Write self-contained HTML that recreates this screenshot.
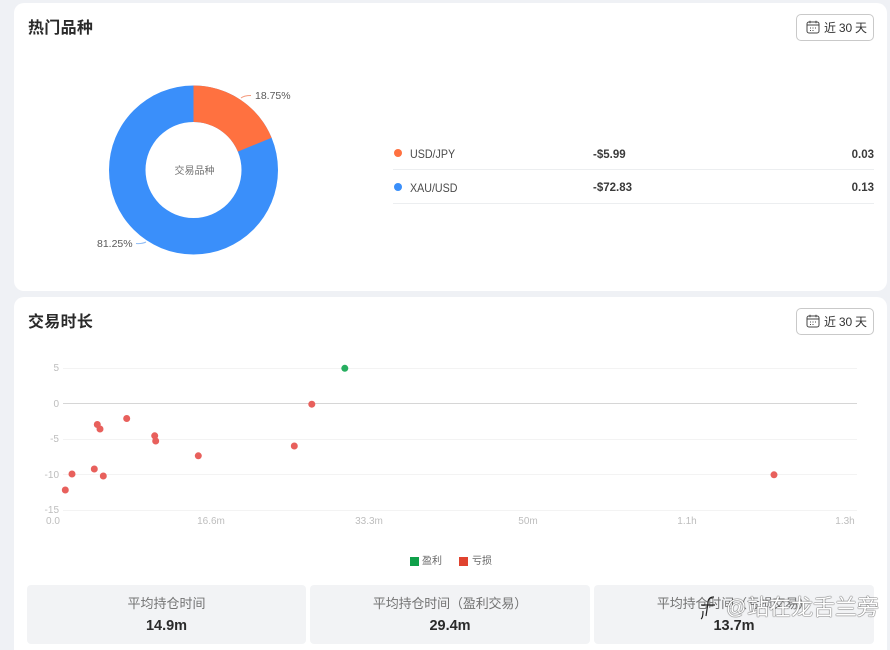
<!DOCTYPE html>
<html><head><meta charset="utf-8">
<style>
html,body{margin:0;padding:0;width:890px;height:650px;overflow:hidden;background:#eff1f5;font-family:"Liberation Sans","Noto Sans CJK SC",sans-serif;color:#262626}
.card{position:absolute;left:14px;width:873px;background:#fff;border-radius:10px}
.abs{position:absolute;white-space:nowrap}
.title{font-size:16px;font-weight:700;color:#2a2a2a;line-height:22px;letter-spacing:.3px}
.btn{position:absolute;left:796px;width:76px;height:25px;border:1px solid #c9c9c9;border-radius:5px;background:#fff;font-size:12px;line-height:26px;color:#333}
.btn svg{position:absolute;left:9px;top:5px}
.btn span{position:absolute;left:27px;top:0;white-space:nowrap;word-spacing:-.5px}
.dot{position:absolute;width:8px;height:8px;border-radius:50%}
.line{position:absolute;left:393px;width:481px;height:1px;background:#eceef0}
.t12{font-size:12px;line-height:16px}
.name{color:#4a4a4a;transform:scaleX(.89);transform-origin:0 50%}
.num{font-weight:700;color:#3a3a3a;font-size:11.5px}
.stat{position:absolute;top:585px;height:59px;background:#f2f3f5;border-radius:4px;text-align:center}
.stat .a{position:absolute;left:0;right:0;top:10px;font-size:13px;line-height:17px;color:#737373}
.stat .b{position:absolute;left:0;right:0;top:31px;font-size:14.5px;line-height:20px;font-weight:700;color:#2a2a2a}
.wm{position:absolute;top:595px;font-size:22px;line-height:26px;color:#fff;white-space:nowrap;text-shadow:0 0 1px #333,0 0 1px #333}
</style></head><body>
<div class="card" style="top:3px;height:288px"></div>
<div class="card" style="top:297px;height:353px;border-radius:10px 10px 0 0"></div>

<div class="abs title" style="left:28px;top:18px">热门品种</div>
<div class="btn" style="top:14px"><svg width="14" height="14" viewBox="0 0 14 14" fill="none" stroke="#444" stroke-width="1"><rect x="1" y="2" width="12" height="11" rx="2"/><path d="M1 5h12M4 .8v2.4M10 .8v2.4"/><path d="M4 8h1M6.5 8h1M9 8h1M4 10.5h1M6.5 10.5h1" stroke-width=".9"/></svg><span>近 30 天</span></div>

<svg class="abs" style="left:0;top:0" width="400" height="290">
<path d="M193.5 85.5A84.5 84.5 0 1 1 193.5 254.5A84.5 84.5 0 1 1 193.5 85.5Z M193.5 122A48 48 0 1 0 193.5 218A48 48 0 1 0 193.5 122Z" fill="#3a8ffa" fill-rule="evenodd"/>
<path d="M193.5 85.5A84.5 84.5 0 0 1 271.6 137.7L237.8 151.6A48 48 0 0 0 193.5 122Z" fill="#ff7140"/>
<path d="M241 98Q244 95.5 251 95.5" stroke="#f59a7c" fill="none"/>
<path d="M136 243.5Q142 244 146 242" stroke="#8fbcf5" fill="none"/>
<text x="255" y="99" font-size="10.5" fill="#595959">18.75%</text>
<text x="97" y="247" font-size="10.5" fill="#595959">81.25%</text>
<text x="194.5" y="174" font-size="10" fill="#737373" text-anchor="middle">交易品种</text>
</svg>

<div class="dot" style="left:394px;top:149px;background:#ff7140"></div>
<div class="abs t12 name" style="left:410px;top:146px">USD/JPY</div>
<div class="abs t12 num" style="left:593px;top:147px">-$5.99</div>
<div class="abs t12 num" style="right:16px;top:147px">0.03</div>
<div class="line" style="top:169px"></div>
<div class="dot" style="left:394px;top:183px;background:#3a8ffa"></div>
<div class="abs t12 name" style="left:410px;top:180px">XAU/USD</div>
<div class="abs t12 num" style="left:593px;top:180px">-$72.83</div>
<div class="abs t12 num" style="right:16px;top:180px">0.13</div>
<div class="line" style="top:203px"></div>

<div class="abs title" style="left:28px;top:312px">交易时长</div>
<div class="btn" style="top:308px"><svg width="14" height="14" viewBox="0 0 14 14" fill="none" stroke="#444" stroke-width="1"><rect x="1" y="2" width="12" height="11" rx="2"/><path d="M1 5h12M4 .8v2.4M10 .8v2.4"/><path d="M4 8h1M6.5 8h1M9 8h1M4 10.5h1M6.5 10.5h1" stroke-width=".9"/></svg><span>近 30 天</span></div>

<svg class="abs" style="left:0;top:350px" width="890" height="225">
<g stroke="#f3f3f3"><path d="M63 18.5H857M63 89.5H857M63 124.5H857M63 160.5H857"/></g>
<path d="M63 53.5H857" stroke="#d6d6d6"/>
<g font-size="10" fill="#bdbdbd">
<g text-anchor="end"><text x="59" y="21">5</text><text x="59" y="57">0</text><text x="59" y="92">-5</text><text x="59" y="128">-10</text><text x="59" y="163">-15</text></g>
<g text-anchor="middle"><text x="53" y="174">0.0</text><text x="211" y="174">16.6m</text><text x="369" y="174">33.3m</text><text x="528" y="174">50m</text><text x="687" y="174">1.1h</text><text x="845" y="174">1.3h</text></g>
</g>
<circle cx="344.8" cy="18.3" r="3.5" fill="#27ae60"/>
<g fill="#e8605c">
<circle cx="311.8" cy="54.2" r="3.5"/><circle cx="126.7" cy="68.5" r="3.5"/><circle cx="97.3" cy="74.5" r="3.5"/><circle cx="100" cy="79" r="3.5"/><circle cx="154.7" cy="85.8" r="3.5"/><circle cx="155.7" cy="91" r="3.5"/><circle cx="198.3" cy="105.8" r="3.5"/><circle cx="294.3" cy="96" r="3.5"/><circle cx="72" cy="124" r="3.5"/><circle cx="94.3" cy="119" r="3.5"/><circle cx="103.3" cy="126" r="3.5"/><circle cx="65.3" cy="140" r="3.5"/><circle cx="774" cy="124.8" r="3.5"/>
</g>
</svg>

<div class="abs" style="left:410px;top:557px;width:9px;height:9px;background:#0fa04a"></div>
<div class="abs" style="left:422px;top:555px;font-size:10px;line-height:14px;color:#666">盈利</div>
<div class="abs" style="left:459px;top:557px;width:9px;height:9px;background:#e0432f"></div>
<div class="abs" style="left:472px;top:555px;font-size:10px;line-height:14px;color:#666">亏损</div>

<div class="stat" style="left:27px;width:279px"><div class="a">平均持仓时间</div><div class="b">14.9m</div></div>
<div class="stat" style="left:310px;width:280px"><div class="a" style="letter-spacing:-.15px">平均持仓时间（盈利交易）</div><div class="b">29.4m</div></div>
<div class="stat" style="left:594px;width:280px"><div class="a" style="letter-spacing:-.15px">平均持仓时间（亏损交易）</div><div class="b">13.7m</div></div>
<div class="wm" style="left:726px;font-size:20px">@</div>
<div class="wm" style="left:747px">站在龙舌兰旁</div>
<svg class="abs" style="left:698px;top:594px" width="26" height="28" fill="none" stroke="#222" stroke-width="1.2"><path d="M16 3Q10 3 10 9L8 22M3 11H17M5 17Q5 24 3 25"/></svg>
</body></html>
